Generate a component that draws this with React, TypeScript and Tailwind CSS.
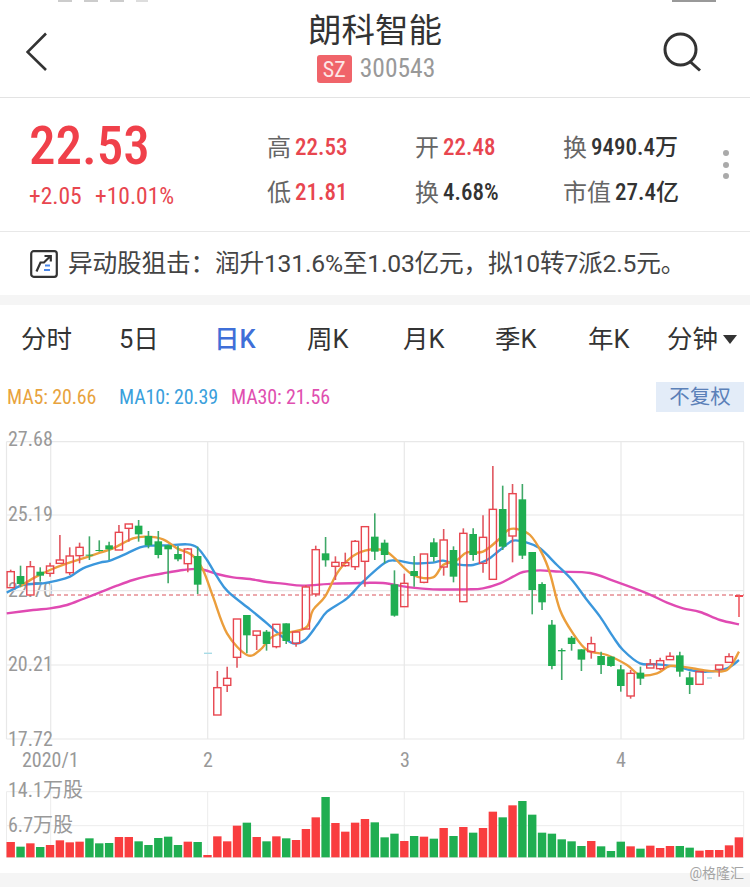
import React from "react";

const NARROW = "font-['Roboto_Condensed',_'Noto_Sans_CJK_SC',_sans-serif]";
const BODY = "font-['Roboto',_'Noto_Sans_CJK_SC',_sans-serif]";

// y values are in 3x picture units, see toY
const toY = (v: number) => v / 3 + 420 - 430;
const toX = (i: number) => 10.7 + 9.84 * i;

// [index, body top, body bottom, wick top, wick bottom]
const up: [number, number, number, number, number][] = [
  [0, 455, 503, 449, 503],
  [2, 440, 525, 423, 525],
  [4, 438, 460, 428, 470],
  [5, 420, 430, 345, 430],
  [6, 408, 458, 382, 465],
  [7, 382, 407, 368, 430],
  [11, 337, 390, 315, 390],
  [12, 312, 325, 312, 365],
  [18, 387, 431, 384, 457],
  [21, 803, 885, 753, 885],
  [22, 775, 796, 740, 816],
  [23, 597, 712, 597, 743],
  [25, 633, 646, 633, 690],
  [27, 613, 680, 613, 685],
  [29, 636, 670, 636, 680],
  [30, 501, 627, 495, 627],
  [31, 389, 522, 377, 530],
  [33, 427, 439, 409, 480],
  [34, 428, 437, 398, 440],
  [35, 364, 440, 360, 450],
  [36, 320, 424, 320, 500],
  [40, 490, 560, 461, 560],
  [42, 402, 487, 402, 490],
  [44, 360, 441, 327, 467],
  [46, 340, 545, 325, 545],
  [48, 352, 430, 286, 458],
  [49, 268, 478, 138, 478],
  [51, 221, 348, 192, 427],
  [59, 671, 695, 650, 716],
  [63, 760, 828, 750, 836],
  [65, 732, 744, 717, 744],
  [66, 722, 746, 713, 750],
  [67, 709, 719, 697, 719],
  [70, 755, 793, 755, 793],
  [72, 735, 748, 735, 770],
  [73, 710, 727, 700, 727],
];
const down: [number, number, number, number, number][] = [
  [1, 468, 492, 437, 500],
  [3, 455, 467, 442, 485],
  [8, 404, 407, 349, 420],
  [9, 390, 393, 361, 395],
  [10, 376, 388, 365, 420],
  [13, 317, 343, 300, 365],
  [14, 348, 376, 333, 385],
  [15, 364, 405, 333, 415],
  [16, 376, 388, 376, 490],
  [17, 402, 418, 378, 424],
  [19, 408, 494, 380, 522],
  [24, 585, 646, 585, 700],
  [26, 635, 672, 630, 692],
  [28, 610, 663, 610, 672],
  [32, 400, 421, 351, 440],
  [37, 350, 395, 280, 420],
  [38, 368, 405, 359, 430],
  [39, 493, 587, 451, 590],
  [41, 453, 468, 408, 500],
  [43, 367, 411, 355, 425],
  [45, 390, 470, 379, 487],
  [47, 342, 405, 325, 422],
  [50, 267, 380, 197, 390],
  [52, 238, 407, 192, 417],
  [53, 396, 510, 396, 583],
  [54, 492, 547, 487, 570],
  [55, 614, 738, 600, 748],
  [56, 690, 694, 685, 780],
  [57, 653, 672, 648, 692],
  [58, 688, 719, 688, 753],
  [60, 708, 735, 695, 762],
  [61, 710, 738, 708, 740],
  [62, 748, 798, 735, 815],
  [64, 758, 776, 740, 795],
  [68, 706, 755, 695, 770],
  [69, 772, 795, 755, 822],
];

// [x in picture, y in 3x units] for the moving averages
const ma30 = [[6.7,580],[33,570],[50,565],[67,555],[83,537],[100,517],[117,497],[133,480],[150,467],[167,458],[183,450],[200,447],[217,462],[233,472],[250,477],[267,486],[283,491],[303,497],[333,491],[363,489],[383,489],[410,502],[433,508],[467,508],[483,505],[500,490],[513,470],[523,456],[540,451],[560,455],[590,459],[613,482],[647,520],[667,548],[683,565],[700,576],[720,600],[739,613]];
const ma10 = [[6.7,518],[23,495],[43,490],[57,482],[70,470],[83,445],[100,428],[110,422],[127,400],[140,382],[150,377],[167,376],[187,373],[197,382],[207,420],[217,470],[228,515],[250,568],[267,610],[280,645],[293,670],[305,660],[317,615],[327,575],[347,535],[363,485],[385,428],[397,422],[413,430],[433,428],[443,422],[457,433],[473,435],[487,420],[500,390],[513,362],[527,368],[540,385],[557,435],[572,480],[587,540],[600,590],[613,650],[623,690],[640,730],[657,733],[677,740],[690,750],[707,755],[727,745],[739,720]];
const ma5 = [[20,500],[33,475],[50,450],[67,430],[83,415],[100,398],[113,385],[133,355],[147,350],[163,358],[177,385],[192,405],[203,450],[213,530],[227,640],[247,705],[260,690],[270,655],[280,640],[293,635],[307,620],[313,570],[325,530],[337,460],[350,415],[365,392],[383,390],[393,410],[413,465],[433,472],[443,435],[457,420],[467,397],[483,395],[500,355],[508,330],[517,327],[530,345],[542,400],[550,460],[560,570],[573,640],[587,690],[607,705],[627,735],[640,765],[657,760],[670,738],[687,742],[707,752],[727,750],[739,695]];

function smooth(pts: number[][]) {
  const p = pts.map(([x, y]) => [x, toY(y)]);
  let d = `M${p[0][0]} ${p[0][1]}`;
  for (let i = 0; i < p.length - 1; i++) {
    const a = p[i - 1] || p[i];
    const b = p[i];
    const c = p[i + 1];
    const e = p[i + 2] || c;
    d += ` C${b[0] + (c[0] - a[0]) / 6} ${b[1] + (c[1] - a[1]) / 6} ${c[0] - (e[0] - b[0]) / 6} ${c[1] - (e[1] - b[1]) / 6} ${c[0]} ${c[1]}`;
  }
  return d;
}

const volumes: [number, "r" | "g"][] = [
  [306,"r"],[320,"g"],[310,"r"],[321,"g"],[315,"r"],[301,"r"],[307,"r"],[305,"r"],[295,"g"],[310,"g"],
  [309,"g"],[291,"r"],[291,"r"],[304,"g"],[315,"g"],[294,"g"],[290,"g"],[315,"g"],[305,"r"],[306,"g"],
  [345,"r"],[289,"r"],[304,"r"],[257,"r"],[248,"g"],[291,"r"],[304,"g"],[289,"r"],[295,"g"],[300,"r"],
  [267,"r"],[232,"r"],[171,"g"],[249,"r"],[275,"r"],[248,"r"],[237,"r"],[247,"g"],[292,"g"],[281,"g"],
  [303,"r"],[288,"g"],[290,"r"],[296,"g"],[264,"r"],[288,"g"],[261,"r"],[278,"g"],[264,"r"],[215,"r"],
  [232,"g"],[196,"r"],[183,"g"],[224,"g"],[278,"g"],[281,"g"],[298,"g"],[304,"g"],[318,"g"],[303,"r"],
  [319,"g"],[333,"g"],[305,"g"],[319,"r"],[326,"g"],[317,"r"],[324,"r"],[318,"r"],[318,"g"],[323,"g"],
  [332,"r"],[330,"r"],[330,"r"],[316,"r"],[292,"r"],
];

function KChart() {
  return (
    <svg width="750" height="330" className="block">
      {[441.7, 515, 590.7, 665, 739].map((y) => (
        <line key={y} x1="6.5" x2="744" y1={y - 430} y2={y - 430} stroke="#e8e8e8" strokeWidth="1.2" />
      ))}
      {[6.5, 50.7, 207.7, 404.3, 621, 743.7].map((x) => (
        <line key={x} x1={x} x2={x} y1="11.7" y2="309" stroke="#e8e8e8" strokeWidth="1.2" />
      ))}
      <line x1="50" x2="744" y1="165" y2="165" stroke="#d9525a" strokeWidth="1" strokeDasharray="4 3" />
      <path d={smooth(ma30)} fill="none" stroke="#e04ab2" strokeWidth="2.4" />
      <path d={smooth(ma10)} fill="none" stroke="#3b97dc" strokeWidth="2.4" />
      <path d={smooth(ma5)} fill="none" stroke="#eb9e3c" strokeWidth="2.4" />
      {down.map(([i, t, b, wt, wb]) => (
        <g key={i}>
          <line x1={toX(i)} x2={toX(i)} y1={toY(wt)} y2={toY(wb)} stroke="#3fa868" strokeWidth="1.6" />
          <rect x={toX(i) - 3.8} y={toY(t)} width="7.6" height={(b - t) / 3} fill="#1fae51" />
        </g>
      ))}
      {up.map(([i, t, b, wt, wb]) => (
        <g key={i}>
          <line x1={toX(i)} x2={toX(i)} y1={toY(wt)} y2={toY(t)} stroke="#e0565f" strokeWidth="1.6" />
          <line x1={toX(i)} x2={toX(i)} y1={toY(b)} y2={toY(wb)} stroke="#e0565f" strokeWidth="1.6" />
          <rect x={toX(i) - 3.6} y={toY(t)} width="7.2" height={(b - t) / 3} fill="none" stroke="#e8464f" strokeWidth="1.4" />
        </g>
      ))}
      <line x1="204" x2="212" y1="223.3" y2="223.3" stroke="#a8dbe6" strokeWidth="1.4" />
      <line x1="707" x2="712" y1="248" y2="248" stroke="#a8dbe6" strokeWidth="1.4" />
      <rect x="735" y="165" width="8" height="2" fill="#ef4a52" />
      <line x1="739" x2="739" y1="165" y2="187" stroke="#ef5a62" strokeWidth="1.6" />
    </svg>
  );
}

function VolumeChart() {
  return (
    <svg width="750" height="70" className="block">
      {[1.7, 35.7, 67.5].map((y) => (
        <line key={y} x1="6.5" x2="744" y1={y} y2={y} stroke="#ececec" strokeWidth="1" />
      ))}
      {[6.5, 50.7, 207.7, 404.3, 621, 743.7].map((x) => (
        <line key={x} x1={x} x2={x} y1="1.7" y2="67.5" stroke="#ececec" strokeWidth="1" />
      ))}
      {volumes.map(([top, c], i) => (
        <rect
          key={i}
          x={toX(i) - 4.2}
          y={top / 3 - 50}
          width="8.4"
          height={(352 - top) / 3}
          fill={c === "r" ? "#f93d3f" : "#1fae51"}
        />
      ))}
    </svg>
  );
}

function Stat({ label, value, red }: { label: string; value: string; red?: boolean }) {
  return (
    <div className="flex items-center gap-[4px] h-[45px]">
      <span className="text-[24px] leading-none text-[#666]">{label}</span>
      <span className={`${NARROW} text-[23px] leading-none font-medium ${red ? "text-[#e8464f]" : "text-[#333]"}`}>
        {value}
      </span>
    </div>
  );
}

export default function App() {
  return (
    <div className={`relative w-[750px] h-[887px] overflow-hidden bg-white ${BODY}`}>
      {/* what is left of the status bar */}
      <div className="absolute left-[58px] top-0 flex gap-[12px]">
        <span className="h-[2px] w-[14px] bg-[#ccc]" />
        <span className="h-[2px] w-[14px] bg-[#ccc]" />
        <span className="h-[2px] w-[14px] bg-[#ccc]" />
        <span className="h-[2px] w-[12px] bg-[#ddd]" />
      </div>
      <div className="absolute left-[672px] top-0 h-[1.5px] w-[44px] bg-[#999]" />

      {/* header */}
      <div className="grid h-[98px] grid-cols-[1fr_auto_1fr] items-start border-b border-[#e3e3e3]">
        <div className="pl-[26px] pt-[32px]">
          <svg width="24" height="40" viewBox="0 0 24 40" fill="none" stroke="#333" strokeWidth="2.6">
            <path d="M20 1.5 L1.5 20 L20 38" />
          </svg>
        </div>
        <div className="flex flex-col items-center pt-[11px]">
          <div className="text-[33.5px] leading-[40px] text-[#333]">朗科智能</div>
          <div className="mt-[4px] flex items-center gap-[8px] pl-[2px]">
            <span className={`${NARROW} flex h-[28px] w-[35px] items-center justify-center rounded-[3px] bg-[#f0646a] text-[22px] text-[#fde6e6]`}>
              SZ
            </span>
            <span className={`${NARROW} text-[25.5px] leading-none text-[#999]`}>300543</span>
          </div>
        </div>
        <div className="flex justify-end pr-[46px] pt-[31px]">
          <svg width="42" height="42" viewBox="0 0 42 42" fill="none" stroke="#333" strokeWidth="3">
            <circle cx="18.5" cy="18.5" r="15.5" />
            <path d="M28.5 31 L38 39.5" />
          </svg>
        </div>
      </div>

      {/* quote */}
      <div className="flex h-[134px] border-b border-[#e8e8e8]">
        <div className={`${NARROW} w-[238px] pl-[29px] pt-[19px]`}>
          <div className="text-[53px] leading-[58px] font-medium text-[#f0404a]">22.53</div>
          <div className="mt-[7px] flex text-[23.5px] leading-[28px] text-[#e8464f]">
            <span className="w-[66px]">+2.05</span>
            <span>+10.01%</span>
          </div>
        </div>
        <div className="ml-[29px] w-[148px] pt-[27px]">
          <Stat label="高" value="22.53" red />
          <Stat label="低" value="21.81" red />
        </div>
        <div className="w-[148px] pt-[27px]">
          <Stat label="开" value="22.48" red />
          <Stat label="换" value="4.68%" />
        </div>
        <div className="w-[150px] pt-[27px]">
          <Stat label="换" value="9490.4万" />
          <Stat label="市值" value="27.4亿" />
        </div>
        <div className="ml-[10px] flex flex-col gap-[5.5px] pt-[52px]">
          <span className="size-[6px] rounded-full bg-[#aaa]" />
          <span className="size-[6px] rounded-full bg-[#aaa]" />
          <span className="size-[6px] rounded-full bg-[#aaa]" />
        </div>
      </div>

      {/* notice */}
      <div className="flex h-[63px] items-center gap-[10px] pl-[30px]">
        <svg width="28" height="28" viewBox="0 0 28 28" fill="none">
          <rect x="1.2" y="1.2" width="25.6" height="25.6" rx="2.5" stroke="#333" strokeWidth="2.2" />
          <path d="M6.5 21.5 L10.5 12.5 H14 L20 6.5 M14.5 6 H20.8 V11.5" stroke="#333" strokeWidth="2.2" />
          <rect x="15" y="14.5" width="5" height="2" fill="#4a86e8" />
          <rect x="14" y="19" width="6" height="2" fill="#4a86e8" />
        </svg>
        <div className="mt-[2px] text-[24.7px] leading-none tracking-[-0.2px] text-[#444] whitespace-nowrap">
          异动股狙击：润升131.6%至1.03亿元，拟10转7派2.5元。
        </div>
      </div>
      <div className="h-[10px] bg-[#f5f5f5]" />

      {/* tabs */}
      <div className="h-[68px] text-[25.5px] leading-none text-[#333]">
        <div className="flex h-full items-center pt-[1px]">
          <span className="ml-[21px] w-[98px]">分时</span>
          <span className="w-[95px]">5日</span>
          <span className="w-[93px] font-medium text-[#3f6fd8]">日K</span>
          <span className="w-[96px]">周K</span>
          <span className="w-[92px]">月K</span>
          <span className="w-[93px]">季K</span>
          <span className="w-[79px]">年K</span>
          <span>分钟</span>
          <span className="ml-[5px] size-0 border-x-[7.5px] border-t-[9px] border-x-transparent border-t-[#333]" />
        </div>
      </div>

      {/* ma row */}
      <div className="mt-[9px] mb-[18px] flex h-[30px] items-center justify-between pl-[7px] pr-[6px]">
        <div className={`${NARROW} flex text-[20px] leading-none tracking-[-0.15px] whitespace-nowrap`}>
          <span className="w-[112px] text-[#e8a33d]">MA5: 20.66</span>
          <span className="w-[112px] text-[#3aa0dc]">MA10: 20.39</span>
          <span className="text-[#e04fb0]">MA30: 21.56</span>
        </div>
        <span className="flex h-[30px] w-[88px] items-center justify-center bg-[#e3ecf8] text-[20.5px] leading-none text-[#5b80b8]">
          不复权
        </span>
      </div>

      {/* chart */}
      <div className={`${NARROW} relative h-[360px] text-[#999] text-[20px] leading-none`}>
        <span className="absolute left-[8px] top-[149.5px]">22.70</span>
        <div className="absolute left-0 top-0">
          <KChart />
        </div>
        <span className="absolute left-[8px] top-[-1px]">27.68</span>
        <span className="absolute left-[8px] top-[74px]">25.19</span>
        <span className="absolute left-[8px] top-[223.5px]">20.21</span>
        <span className="absolute left-[8px] top-[298.5px]">17.72</span>
        <span className="absolute left-[22px] top-[319.5px]">2020/1</span>
        <span className="absolute left-[203px] top-[319.5px]">2</span>
        <span className="absolute left-[400px] top-[319.5px]">3</span>
        <span className="absolute left-[616px] top-[319.5px]">4</span>
      </div>

      {/* volume */}
      <div className={`${NARROW} relative h-[83px] text-[20px] leading-none text-[#999]`}>
        <VolumeChart />
        <span className="absolute left-[8px] top-[-10px]">14.1万股</span>
        <span className="absolute left-[8px] top-[24.5px]">6.7万股</span>
      </div>

      <div className="h-[14px] bg-[#f5f5f5]" />
      <span className="absolute right-[6px] bottom-[7px] text-[14px] leading-none text-[#a5a5a5]">@格隆汇</span>
    </div>
  );
}
